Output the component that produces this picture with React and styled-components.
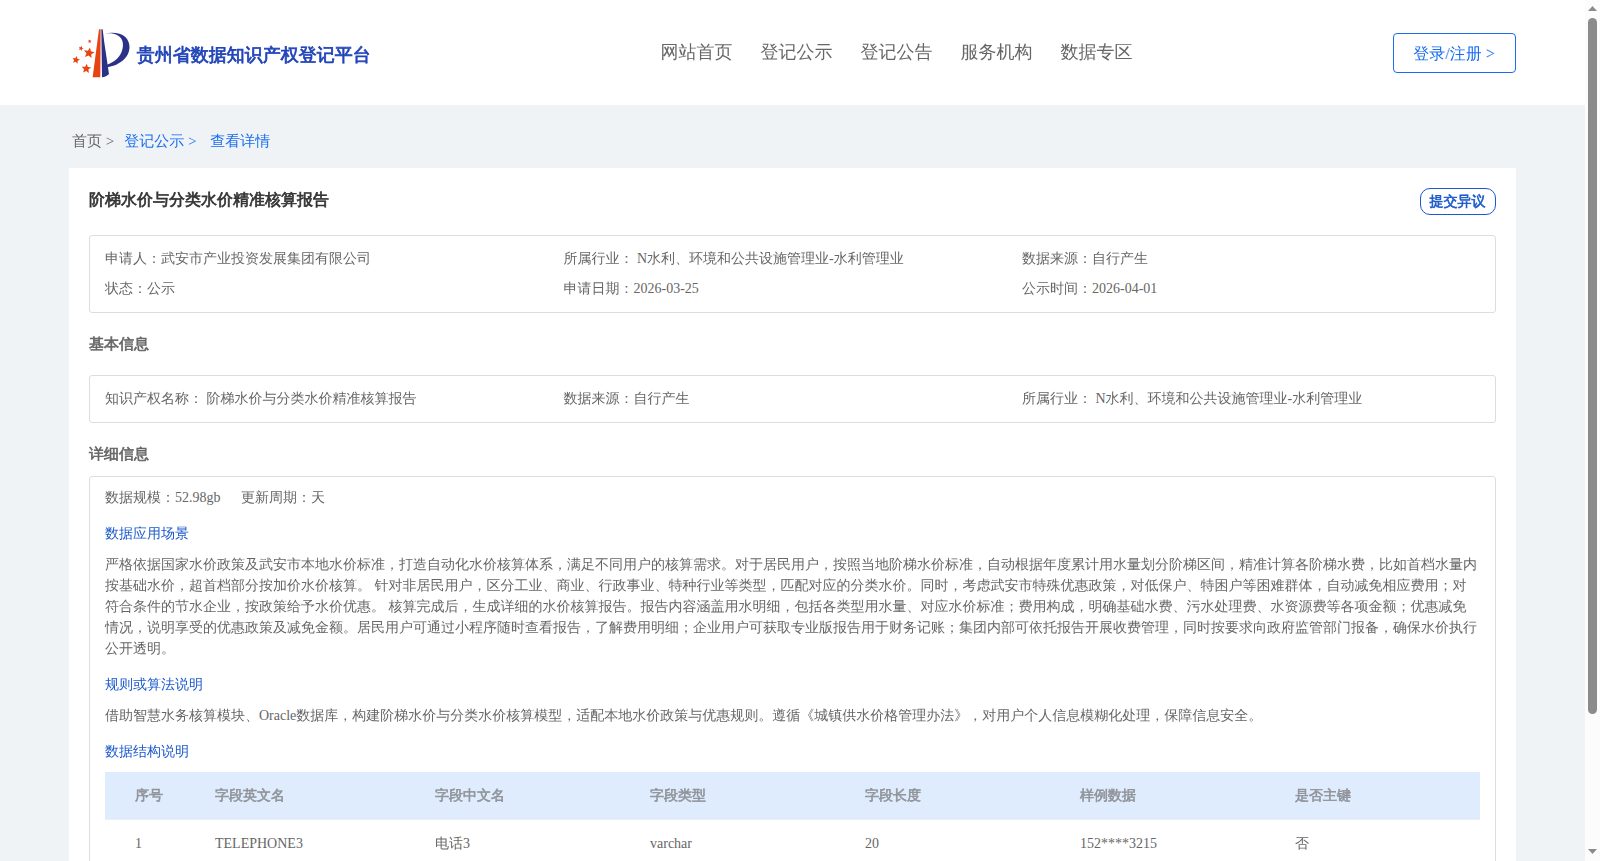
import React from 'react';
import styled, { createGlobalStyle, css } from 'styled-components';

const NAV_ITEMS = ['网站首页', '登记公示', '登记公告', '服务机构', '数据专区'];

const SUMMARY = [
  '申请人：武安市产业投资发展集团有限公司',
  '所属行业： N水利、环境和公共设施管理业-水利管理业',
  '数据来源：自行产生',
  '状态：公示',
  '申请日期：2026-03-25',
  '公示时间：2026-04-01'
];

const BASIC = [
  '知识产权名称： 阶梯水价与分类水价精准核算报告',
  '数据来源：自行产生',
  '所属行业： N水利、环境和公共设施管理业-水利管理业'
];

const SCENE = '严格依据国家水价政策及武安市本地水价标准，打造自动化水价核算体系，满足不同用户的核算需求。对于居民用户，按照当地阶梯水价标准，自动根据年度累计用水量划分阶梯区间，精准计算各阶梯水费，比如首档水量内按基础水价，超首档部分按加价水价核算。 针对非居民用户，区分工业、商业、行政事业、特种行业等类型，匹配对应的分类水价。同时，考虑武安市特殊优惠政策，对低保户、特困户等困难群体，自动减免相应费用；对符合条件的节水企业，按政策给予水价优惠。 核算完成后，生成详细的水价核算报告。报告内容涵盖用水明细，包括各类型用水量、对应水价标准；费用构成，明确基础水费、污水处理费、水资源费等各项金额；优惠减免情况，说明享受的优惠政策及减免金额。居民用户可通过小程序随时查看报告，了解费用明细；企业用户可获取专业版报告用于财务记账；集团内部可依托报告开展收费管理，同时按要求向政府监管部门报备，确保水价执行公开透明。';

const RULES = '借助智慧水务核算模块、Oracle数据库，构建阶梯水价与分类水价核算模型，适配本地水价政策与优惠规则。遵循《城镇供水价格管理办法》，对用户个人信息模糊化处理，保障信息安全。';

const COLUMNS = ['序号', '字段英文名', '字段中文名', '字段类型', '字段长度', '样例数据', '是否主键'];

const ROWS = [
  ['1', 'TELEPHONE3', '电话3', 'varchar', '20', '152****3215', '否']
];

// cx, cy, radius, rotation in degrees
const STARS = [
  [87, 98, 17, 10],
  [79, 145, 15, 5],
  [48, 119, 12, 12],
  [63, 84, 8, 20],
  [89, 63, 6, 0]
];

function starPoints([cx, cy, r, rotation]) {
  return Array.from({ length: 10 }, (_, i) => {
    const radius = i % 2 ? r * .45 : r;
    const angle = (i * 36 - 90 + rotation) * Math.PI / 180;
    return `${(cx + radius * Math.cos(angle)).toFixed(1)},${(cy + radius * Math.sin(angle)).toFixed(1)}`;
  }).join(' ');
}

function Logo() {
  return (
    <LogoMark viewBox='30 20 182 156' aria-hidden='true'>
      <path fill='#e64513' d='M117 27h5l-1 144H98z' />
      <path fill='#2b3187' d='M124 27h4l5 40 14 94c-5 5-13 9-21 10z' />
      <path
        fill='#2b3187'
        d='M134 39c22-4 48-3 62 11 16 16 16 40 4 58-12 17-32 29-58 33l-1-8c20-7 37-20 44-39 8-21 4-39-10-48-11-7-25-8-41-7z' />
      {STARS.map((star) => (
        <polygon key={star[0]} fill='#e64513' points={starPoints(star)} />
      ))}
    </LogoMark>
  );
}

function InfoBox({ items }) {
  return (
    <Box>
      <InfoGrid>
        {items.map((item) => <InfoItem key={item}>{item}</InfoItem>)}
      </InfoGrid>
    </Box>
  );
}

function App() {
  return (
    <Window>
      <GlobalStyle />

      <Page>
        <Header>
          <Brand>
            <Logo />
            <BrandName>贵州省数据知识产权登记平台</BrandName>
          </Brand>

          <Nav>
            {NAV_ITEMS.map((item) => <NavLink key={item}>{item}</NavLink>)}
          </Nav>

          <LoginButton>登录/注册 &gt;</LoginButton>
        </Header>

        <Main>
          <Breadcrumb>
            <Crumb>首页 &gt;</Crumb>
            <Crumb $active $gap={10}>登记公示 &gt;</Crumb>
            <Crumb $active $gap={13.7}>查看详情</Crumb>
          </Breadcrumb>

          <Card>
            <TitleBar>
              <Title>阶梯水价与分类水价精准核算报告</Title>
              <ObjectionButton>提交异议</ObjectionButton>
            </TitleBar>

            <InfoBox items={SUMMARY} />

            <SectionTitle $height={62}>基本信息</SectionTitle>
            <InfoBox items={BASIC} />

            <SectionTitle $height={53}>详细信息</SectionTitle>
            <Box $detail>
              <Meta>
                <span>数据规模：52.98gb</span>
                <span>更新周期：天</span>
              </Meta>

              <SubTitle>数据应用场景</SubTitle>
              <Paragraph>{SCENE}</Paragraph>

              <SubTitle>规则或算法说明</SubTitle>
              <Paragraph>{RULES}</Paragraph>

              <SubTitle>数据结构说明</SubTitle>
              <Table>
                <TableHead>
                  {COLUMNS.map((column) => <span key={column}>{column}</span>)}
                </TableHead>
                {ROWS.map((row) => (
                  <TableRow key={row[0]}>
                    {row.map((cell, i) => <span key={COLUMNS[i]}>{cell}</span>)}
                  </TableRow>
                ))}
              </Table>
            </Box>
          </Card>
        </Main>
      </Page>

      <Scrollbar>
        <Arrow viewBox='0 0 9 5'><path d='M0 5L4.5 0L9 5z' /></Arrow>
        <Thumb />
        <Arrow viewBox='0 0 9 5'><path d='M0 0L4.5 5L9 0z' /></Arrow>
      </Scrollbar>
    </Window>
  );
}

const GlobalStyle = createGlobalStyle`
  * {
    box-sizing: border-box;
  }

  body {
    margin: 0;
    overflow: hidden;
    color: #666;
    font-family: 'Liberation Serif', 'WenQuanYi Zen Hei', 'Droid Sans Fallback', 'Noto Sans CJK SC', serif;
    font-size: 14px;
    text-spacing-trim: space-all;
  }
`;

// the CJK face has a single weight, so bold text is thickened by a stroke
const bold = css`
  font-weight: bold;
  -webkit-text-stroke: .042em currentColor;
`;

const Window = styled.div`
  display: grid;
  grid-template-columns: 1fr 15px;
  height: 861px;
  overflow: hidden;
`;

const Page = styled.div`
  height: 861px;
  overflow: hidden;
  background-color: #eff3f6;
`;

const Header = styled.header`
  display: grid;
  grid-template-columns: 591.5px 1fr auto;
  align-items: center;
  height: 105px;
  padding: 0 69px;
  background-color: #fff;
`;

const Brand = styled.div`
  display: flex;
  align-items: center;
  padding-left: 1px;
`;

const LogoMark = styled.svg`
  width: 60.67px;
  height: 52px;
`;

const BrandName = styled.h1`
  margin: 5px 0 0 6px;
  color: #2144b8;
  font-size: 18px;
  line-height: 26px;
  ${bold}
`;

const Nav = styled.nav`
  display: flex;
  gap: 28px;
  padding-bottom: 2px;
`;

const NavLink = styled.a`
  font-size: 18px;
  line-height: 26px;
`;

const LoginButton = styled.button`
  width: 123px;
  height: 40px;
  padding: 1px 1px 0 0;
  border: 1px solid #1a6df0;
  border-radius: 4px;
  background: none;
  color: #1a6df0;
  font-family: inherit;
  font-size: 16px;
  line-height: 37px;
`;

const Main = styled.main`
  padding: 0 69px;
`;

const Breadcrumb = styled.div`
  display: flex;
  align-items: center;
  height: 63px;
  padding: 9px 3px 0;
  font-size: 15px;
  line-height: 22px;
`;

const Crumb = styled.span`
  margin-left: ${({ $gap }) => $gap || 0}px;
  color: ${({ $active }) => ($active ? '#1a6df0' : '#666')};
`;

const Card = styled.section`
  padding: 20px;
  background-color: #fff;
`;

const TitleBar = styled.div`
  display: flex;
  justify-content: space-between;
  height: 47px;
`;

const Title = styled.h2`
  margin: 0;
  color: #333;
  font-size: 16px;
  line-height: 24px;
  ${bold}
`;

const ObjectionButton = styled.button`
  width: 76px;
  height: 27px;
  padding: 0 1px 0 0;
  border: 1px solid #1b59cb;
  border-radius: 10px;
  background: none;
  color: #1b59cb;
  font-family: inherit;
  font-size: 14px;
  line-height: 25px;
  ${bold}
`;

const Box = styled.div`
  padding: ${({ $detail }) => ($detail ? '6px 15px' : '8px 15px')};
  border: 1px solid #ddd;
  border-radius: 3px;
`;

const InfoGrid = styled.div`
  display: grid;
  grid-template-columns: 458.5px 458.5px 1fr;
`;

const InfoItem = styled.div`
  line-height: 30px;
  white-space: nowrap;
`;

const SectionTitle = styled.h3`
  height: ${({ $height }) => $height}px;
  margin: 0;
  padding-top: 16px;
  font-size: 15px;
  line-height: 31px;
  ${bold}
`;

const Meta = styled.div`
  display: flex;
  gap: 20.5px;
  line-height: 30px;
`;

const SubTitle = styled.h4`
  margin: 10px 0 5px;
  color: #1b59cb;
  font-size: 14px;
  font-weight: normal;
  line-height: 21px;
`;

const Paragraph = styled.p`
  margin: 10px 0 15px;
  line-height: 21px;
`;

const Table = styled.div`
  margin-top: 10px;
`;

const TableRow = styled.div`
  display: grid;
  grid-template-columns: 80px 220px repeat(4, 215px) 1fr;
  height: 48px;
  padding-left: 30px;
  border-bottom: 1px solid #ebeef5;
  line-height: 47px;
`;

const TableHead = styled(TableRow)`
  background-color: #dfecfe;
  color: #909399;
  ${bold}
`;

const Scrollbar = styled.aside`
  display: flex;
  flex-direction: column;
  align-items: flex-start;
  padding: 6px 0 7px 3px;
  background-color: #fcfcfc;
`;

const Arrow = styled.svg`
  width: 9px;
  height: 5px;
  fill: #8b8b8b;
`;

const Thumb = styled.div`
  width: 9px;
  height: 696px;
  margin: 7px 0 auto;
  border-radius: 5px;
  background-color: #8b8b8b;
`;

export default App;
